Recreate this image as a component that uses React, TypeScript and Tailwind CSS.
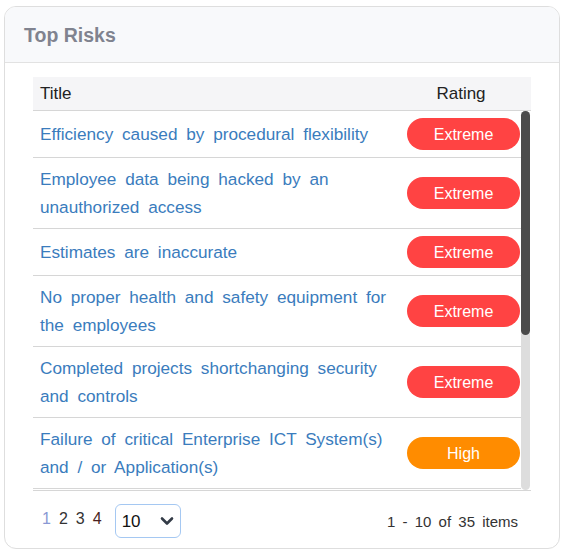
import React from "react";

type Risk = { title: string; rating: "Extreme" | "High" };

const risks: Risk[] = [
  { title: "Efficiency caused by procedural flexibility", rating: "Extreme" },
  { title: "Employee data being hacked by an unauthorized access", rating: "Extreme" },
  { title: "Estimates are inaccurate", rating: "Extreme" },
  { title: "No proper health and safety equipment for the employees", rating: "Extreme" },
  { title: "Completed projects shortchanging security and controls", rating: "Extreme" },
  { title: "Failure of critical Enterprise ICT System(s) and / or Application(s)", rating: "High" },
  { title: "Inadequate disaster recovery planning", rating: "High" },
];

export default function App() {
  return (
    <div className="w-[564px] h-[555px] bg-white pt-[6px] pl-[4px]" style={{ fontFamily: '"Liberation Sans", Arial, sans-serif' }}>
      <div className="w-[556px] h-[543px] border border-[#dedede] rounded-[12px] overflow-hidden flex flex-col">
        <div className="h-[56px] shrink-0 bg-[#f8f9fb] border-b border-[#e2e2e2] flex items-center pl-[19px] pt-[3px]">
          <span className="text-[19.5px] font-bold text-[#80838f]">Top Risks</span>
        </div>
        <div className="px-[28px] pt-[14px] flex flex-col">
          <div className="h-[34px] bg-[#f5f5f7] border-b border-[#d6d6d6] flex items-center text-[17px] text-[#222]">
            <div className="flex-1 pl-[7px]">Title</div>
            <div className="w-[130px] text-center pr-[10px]">Rating</div>
          </div>
          <div className="flex border-b border-[#d6d6d6]">
            <div className="flex-1 h-[379px] overflow-hidden">
              {risks.map((r, i) => (
                <div key={i} className="flex items-center border-b border-[#d6d6d6] py-[7px]">
                  <div className="flex-1 pl-[7px] pr-[10px] text-[17.2px] leading-[28px] text-[#3a7cbd] [word-spacing:4px]">
                    {r.title}
                  </div>
                  <div className="w-[120px] flex justify-end pr-[1px]">
                    <div
                      className={
                        "w-[113px] h-[32px] rounded-full flex items-center justify-center text-white text-[16px] pt-[1px] " +
                        (r.rating === "Extreme" ? "bg-[#ff4343]" : "bg-[#ff8c00]")
                      }
                    >
                      {r.rating}
                    </div>
                  </div>
                </div>
              ))}
            </div>
            <div className="w-[10px] flex flex-col pr-[1px]">
              <div className="flex-1 bg-[#dddddd] rounded-full flex flex-col">
                <div className="h-[224px] bg-[#4b4b4b] rounded-full"></div>
              </div>
            </div>
          </div>
          <div className="h-[58px] flex items-center">
            <div className="flex items-center gap-[8px] pl-[9px] text-[16px] text-[#333] mt-[-3px]">
              <span className="text-[#8a98d4]">1</span>
              <span>2</span>
              <span>3</span>
              <span className="text-[#4a1f1f]">4</span>
            </div>
            <div className="ml-[13px] w-[66px] h-[34px] border border-[#a5c8f2] rounded-[6px] flex items-center justify-between pl-[6px] pr-[6px] mt-[1px]">
              <span className="text-[17px] text-[#111] mt-[3px]">10</span>
              <svg width="14" height="10" viewBox="0 0 14 10">
                <path d="M2 2.5 L7 7.5 L12 2.5" fill="none" stroke="#333b47" strokeWidth="2.6" strokeLinecap="round" strokeLinejoin="round" />
              </svg>
            </div>
            <div className="flex-1 text-right pr-[13px] text-[15px] text-[#333] mt-[4px] [word-spacing:3px]">
              1 - 10 of 35 items
            </div>
          </div>
        </div>
      </div>
    </div>
  );
}
